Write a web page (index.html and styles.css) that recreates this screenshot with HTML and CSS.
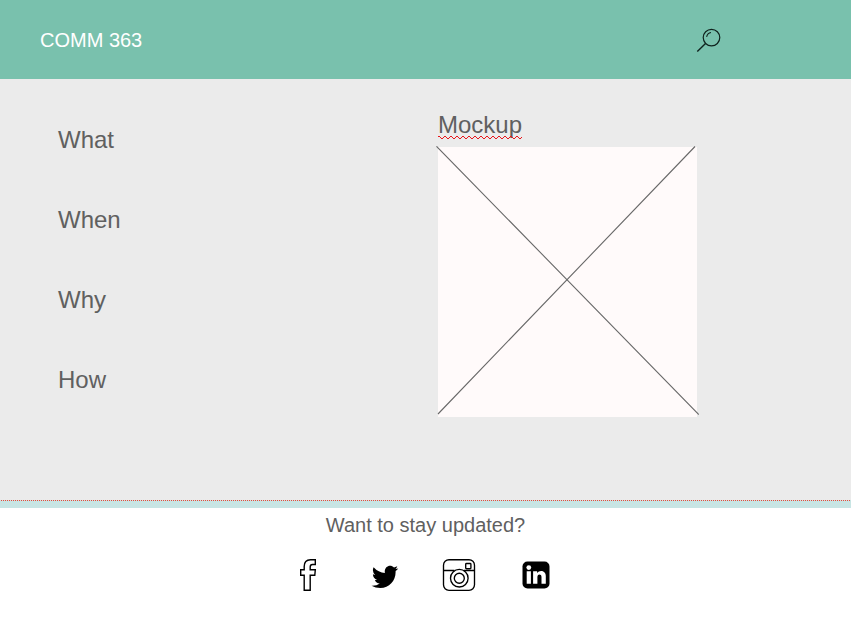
FILE: index.html
```html
<!DOCTYPE html>
<html lang="en">
<head>
<meta charset="utf-8">
<title>COMM 363</title>
<link rel="stylesheet" href="styles.css">
</head>
<body>
<header class="header">
  <h1 class="brand">COMM 363</h1>
  <svg class="search" viewBox="0 0 26 26" width="26" height="26" fill="none" stroke="#10231e">
    <circle cx="15.5" cy="10.6" r="8.3" stroke-width="1.2"/>
    <path d="M10.6 9.8Q11.4 6.3 15 5.5" stroke-width="1.1"/>
    <path d="M9.5 16.6L1.3 24.6" stroke-width="1.4"/>
  </svg>
</header>
<main class="main">
  <nav class="menu">
    <a>What</a>
    <a>When</a>
    <a>Why</a>
    <a class="clipped">How</a>
  </nav>
  <section class="preview">
    <h2 class="title">Mockup<svg class="squiggle" width="84" height="3" shape-rendering="crispEdges"><defs><pattern id="wave" width="6" height="3" patternUnits="userSpaceOnUse"><path d="M0 0h2v1H0zM2 1h1v1H2zM3 2h2v1H3zM5 1h1v1H5z" fill="#e8161b"/></pattern></defs><rect width="84" height="3" fill="url(#wave)"/></svg></h2>
    <div class="placeholder">
      <svg class="cross" width="263" height="271" viewBox="0 0 263 271" stroke="#686868" stroke-width="1.1"><path d="M.5 .3L262.8 268.5M259 .5L2 268"/></svg>
    </div>
  </section>
</main>
<div class="divider"></div>
<footer class="footer">
  <p class="prompt">Want to stay updated?</p>
  <div class="social">
    <svg viewBox="0 0 18 34" width="18" height="34" fill="#fff" stroke="#000" stroke-width="1.4"><path d="M5.2 32.3V17.2H1.7V11.7H5.2V8.5Q5.2 1.7 11.5 1.7H16.3V6.5H13.5Q11.2 6.5 11.2 9V11.7H16.3L15.8 17.2H11.2V32.3Z"/></svg>
    <svg class="bird" viewBox="0 0 28 24" width="28" height="24"><path d="M27.2 3.6Q26 5.4 24.6 6.1C25 15 18.5 23 9.3 23Q4.6 23 .5 20.8Q5.6 21 8.8 18.6Q5 18.1 3.9 14.9H6.1Q2.1 13.4 1.9 9.3L4.2 9.9Q.6 6.7 2.6 2.3Q7.4 7.7 13.9 7.9C12.7 2.2 18.8-1.6 23 2.5L26.3 1.2Q25.7 2.9 24.5 4Z"/></svg>
    <svg viewBox="0 0 34 34" width="34" height="34" fill="none" stroke="#000" stroke-width="1.35"><rect x="1.5" y="1.7" width="31" height="30.6" rx="5.5"/><path d="M1.5 12.5H12.5M22 12.5H32.5"/><circle cx="17.3" cy="20.2" r="8.8"/><circle cx="17.3" cy="20.2" r="5"/><rect x="23.7" y="5.5" width="5.2" height="5.2" rx=".8"/></svg>
    <svg viewBox="0 0 28 28" width="28" height="28"><rect x=".5" y=".5" width="27" height="27" rx="5"/><path fill="#fff" d="M4.7 10.2H8.9V22.8H4.7ZM11.1 10.2H15.1V12C17.4 8.6 23.8 9.3 23.8 15V22.8H19.5V16C19.5 12.7 15.4 12.8 15.4 16V22.8H11.1Z"/><circle cx="6.8" cy="6.6" r="2.4" fill="#fff"/></svg>
  </div>
</footer>
</body>
</html>
```

FILE: styles.css
```css
* { box-sizing: border-box; }
body {
  margin: 0;
  height: 621px;
  overflow: hidden;
  background: #fff;
  color: #606060;
  font-family: "Liberation Sans", Arial, sans-serif;
}
h1, h2, p { margin: 0; font-weight: 400; }
svg { display: block; }
.header {
  display: flex;
  align-items: center;
  justify-content: space-between;
  height: 79px;
  padding: 0 129px 0 40px;
  background: #79c1ad;
}
.brand { color: #fff; font-size: 20px; line-height: 24px; }
.search { margin-top: 1px; }
.main {
  display: grid;
  grid-template-columns: 380px 1fr;
  height: 421px;
  padding: 0 0 0 58px;
  background: #ebebeb;
}
.menu {
  display: flex;
  flex-direction: column;
  gap: 52px;
  padding-top: 47px;
  font-size: 24px;
  line-height: 28px;
}
.clipped { height: 22px; overflow: hidden; }
.preview { padding-top: 32px; }
.title { position: relative; height: 36px; font-size: 24px; line-height: 28px; }
.squiggle { position: absolute; left: 0; top: 25px; }
.placeholder { position: relative; width: 259px; height: 270px; background: #fffafa; }
.cross { position: absolute; left: -2px; top: -1px; }
.divider {
  height: 8px;
  background: repeating-linear-gradient(90deg, #c8e5e4 0 1px, #e8493a 1px 2px) 0 0 / 100% 1px no-repeat #c8e5e4;
}
.footer { padding-top: 5px; }
.prompt { font-size: 20px; line-height: 24px; text-align: center; }
.social {
  display: grid;
  grid-template-columns: 72px 71px 80px 28px;
  align-items: center;
  height: 34px;
  margin: 21px 0 0 299px;
}
.bird { margin-top: 3px; }
```
